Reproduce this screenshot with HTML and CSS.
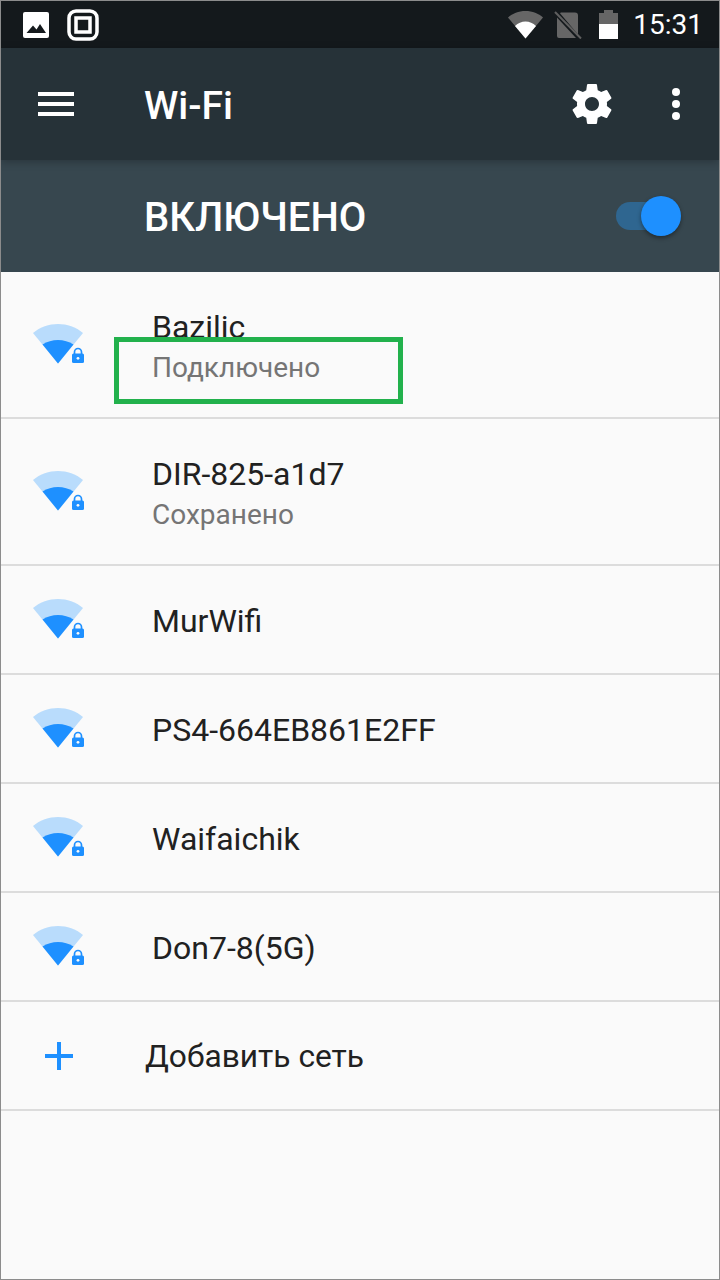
FILE: index.html
```html
<!DOCTYPE html>
<html lang="ru">
<head>
<meta charset="utf-8">
<title>Wi-Fi</title>
<link rel="stylesheet" href="styles.css">
</head>
<body>
<svg class="defs" width="0" height="0" aria-hidden="true">
  <symbol id="wifi" viewBox="0 0 56 44">
    <path d="M27 39.500 2 9C9 3 18 0 27 0S45 3 52 9Z" fill="#b9dcfc"/>
    <path d="M27 39.500 11.500 20.500C16 17.500 21.500 16 27 16S38 17.500 42.500 20.500Z" fill="#1e90ff"/>
    <path d="M43.500 30v-2a3.500 3.500 0 0 1 7 0v2" fill="none" stroke="#1e90ff" stroke-width="1.700"/>
    <rect x="41" y="29.500" width="12" height="9.500" rx="1.500" fill="#1e90ff"/>
    <circle cx="47" cy="34.300" r="1.400" fill="#fafafa"/>
  </symbol>
</svg>
<div class="phone">
  <div class="status">
    <div class="status-left">
      <svg class="ic-photo" width="26" height="26" viewBox="0 0 26 26"><rect width="26" height="26" rx="2" fill="#fff"/><path d="M3.500 21 10 13.500l3.500 4L17 12l6 9Z" fill="#14191c"/></svg>
      <svg class="ic-screen" width="32" height="32" viewBox="0 0 32 32"><rect x="2" y="2" width="28" height="28" rx="7" fill="none" stroke="#fff" stroke-width="3.500"/><rect x="9" y="9" width="14" height="14" fill="none" stroke="#fff" stroke-width="3.500"/></svg>
    </div>
    <div class="status-right">
      <svg class="ic-sig" width="35" height="28" viewBox="0 0 35 28"><path d="M17.500 27.500 0 6.500C4.500 2.500 10.500 0 17.500 0S30.500 2.500 35 6.500Z" fill="#666"/><path d="M17.500 27.500 7 15C10 12 13.500 10.500 17.500 10.500S25 12 28 15Z" fill="#fff"/></svg>
      <svg class="ic-sim" width="28" height="28" viewBox="0 0 28 28"><path d="M7 1.500h14a3 3 0 0 1 3 3v19L6 2.200C6.300 1.800 6.600 1.500 7 1.500Zm-4 5L22 27H5a2 2 0 0 1-2-2Z" fill="#666"/><path d="M1 1 27 27.500" stroke="#5f5f5f" stroke-width="2"/></svg>
      <svg class="ic-bat" width="19" height="29" viewBox="0 0 19 29"><path d="M5 0h9v3h5v11H0V3h5Z" fill="#666"/><rect y="14" width="19" height="15" fill="#fff"/></svg>
      <span class="clock">15:31</span>
    </div>
  </div>
  <header class="appbar">
    <svg class="ic-menu" width="36" height="24" viewBox="0 0 36 24"><path d="M0 0h36v4H0zM0 10h36v4H0zM0 20h36v4H0z" fill="#fff"/></svg>
    <h1 class="title">Wi-Fi</h1>
    <svg class="ic-gear" width="48" height="48" viewBox="0 0 24 24"><path fill="#fff" d="M19.430 12.980c.04-.32.070-.64.070-.98s-.03-.66-.07-.98l2.110-1.650c.19-.15.240-.42.120-.64l-2-3.460c-.12-.22-.39-.3-.61-.22l-2.490 1c-.52-.4-1.080-.73-1.690-.98l-.38-2.650C14.460 2.180 14.250 2 14 2h-4c-.25 0-.46.180-.49.420l-.38 2.650c-.61.250-1.170.590-1.690.980l-2.490-1c-.23-.09-.49 0-.61.220l-2 3.460c-.13.220-.07.490.12.640l2.110 1.650c-.04.320-.07.650-.07.980s.03.660.07.980l-2.110 1.650c-.19.150-.24.420-.12.640l2 3.460c.12.220.39.300.61.220l2.490-1c.52.400 1.080.730 1.690.980l.38 2.650c.03.240.24.420.49.420h4c.25 0 .46-.18.49-.42l.38-2.650c.61-.25 1.170-.59 1.690-.98l2.490 1c.23.090.49 0 .61-.22l2-3.460c.12-.22.070-.49-.12-.64l-2.110-1.650zM12 15.500c-1.930 0-3.500-1.570-3.500-3.500s1.570-3.500 3.500-3.500 3.500 1.570 3.500 3.500-1.570 3.500-3.500 3.500z"/></svg>
    <svg class="ic-more" width="8" height="32" viewBox="0 0 8 32"><circle cx="4" cy="4" r="4" fill="#fff"/><circle cx="4" cy="16" r="4" fill="#fff"/><circle cx="4" cy="28" r="4" fill="#fff"/></svg>
  </header>
  <div class="switchbar">
    <span class="switch-label">ВКЛЮЧЕНО</span>
    <div class="toggle"><span class="thumb"></span></div>
  </div>
  <ul class="list">
    <li class="row row-tall">
      <svg class="wifi" width="56" height="44"><use href="#wifi"/></svg>
      <div class="text"><div class="name">Bazilic</div><div class="sub">Подключено</div></div>
    </li>
    <li class="row row-tall">
      <svg class="wifi" width="56" height="44"><use href="#wifi"/></svg>
      <div class="text"><div class="name">DIR-825-a1d7</div><div class="sub">Сохранено</div></div>
    </li>
    <li class="row">
      <svg class="wifi" width="56" height="44"><use href="#wifi"/></svg>
      <div class="text"><div class="name">MurWifi</div></div>
    </li>
    <li class="row">
      <svg class="wifi" width="56" height="44"><use href="#wifi"/></svg>
      <div class="text"><div class="name">PS4-664EB861E2FF</div></div>
    </li>
    <li class="row">
      <svg class="wifi" width="56" height="44"><use href="#wifi"/></svg>
      <div class="text"><div class="name">Waifaichik</div></div>
    </li>
    <li class="row">
      <svg class="wifi" width="56" height="44"><use href="#wifi"/></svg>
      <div class="text"><div class="name">Don7-8(5G)</div></div>
    </li>
    <li class="row row-add">
      <svg class="ic-plus" width="28" height="28" viewBox="0 0 28 28"><path d="M12 0h4v12h12v4H16v12h-4V16H0v-4h12Z" fill="#1e90ff"/></svg>
      <div class="name add-name">Добавить сеть</div>
    </li>
  </ul>
  <div class="highlight"></div>
</div>
</body>
</html>
```

FILE: styles.css
```css
* { box-sizing: border-box; }
html, body { margin: 0; padding: 0; }
body { font-family: Roboto, "Noto Sans", sans-serif; background: #fafafa; }
.defs { position: absolute; }
.phone {
  position: relative;
  width: 720px;
  height: 1280px;
  border: 1px solid #8c8c8c;
  background: #fafafa;
  overflow: hidden;
}
.status {
  height: 47px;
  background: #14191c;
  display: flex;
  justify-content: space-between;
  align-items: center;
}
.status-left { display: flex; align-items: center; gap: 18px; padding-left: 22px; }
.status-right { display: flex; align-items: center; padding-right: 16px; }
.ic-sim { margin-left: 11px; }
.ic-bat { margin-left: 17px; }
.clock { margin-left: 15px; color: #fff; font-size: 28px; line-height: 30px; }
.appbar {
  height: 112px;
  background: #263238;
  display: flex;
  align-items: center;
  padding-left: 37px;
  position: relative;
  box-shadow: 0 2px 8px rgba(0, 0, 0, .25);
}
.title { margin: 4px 0 0 70px; flex: 1; color: #fff; font-size: 39px; font-weight: 500; line-height: 48px; }
.ic-gear { margin-right: 56px; }
.ic-more { margin-right: 39px; }
.switchbar {
  height: 112px;
  background: #37474f;
  display: flex;
  align-items: center;
  justify-content: space-between;
  padding: 0 47px 0 143px;
}
.switch-label { color: #fff; font-size: 40px; font-weight: 500; line-height: 48px; margin-top: 3px; }
.toggle { position: relative; width: 56px; height: 28px; border-radius: 14px; background: #2f6690; }
.thumb {
  position: absolute;
  right: -9px;
  top: -6px;
  width: 40px;
  height: 40px;
  border-radius: 50%;
  background: #1e90ff;
  box-shadow: 0 2px 4px rgba(0, 0, 0, .4);
}
.list { list-style: none; margin: 0; padding: 0; }
.row {
  height: 109px;
  display: flex;
  align-items: center;
  border-bottom: 2px solid #dcdcdc;
  padding-left: 30px;
}
.row-tall { height: 147px; }
.wifi { flex: none; margin-top: 3px; }
.text { margin-left: 65px; padding-top: 2px; }
.row-tall .text { padding-top: 4px; }
.name { color: #212121; font-size: 32px; line-height: 40px; }
.sub { color: #757575; font-size: 28px; line-height: 36px; margin-top: 3px; }
.row-add { padding-left: 44px; }
.add-name { margin-left: 72px; padding-top: 2px; font-size: 31.7px; }
.highlight {
  position: absolute;
  left: 113px;
  top: 336px;
  width: 289px;
  height: 67px;
  border: 5px solid #22b14c;
}
```
